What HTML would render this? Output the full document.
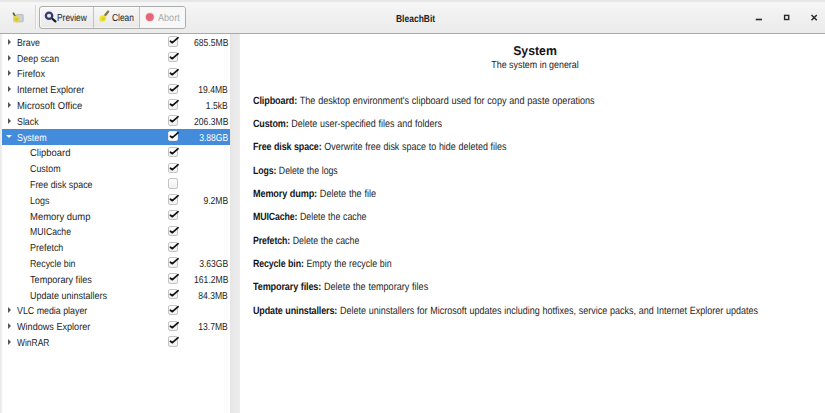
<!DOCTYPE html>
<html><head><meta charset="utf-8"><title>BleachBit</title><style>
html,body{margin:0;padding:0;}
body{width:825px;height:413px;overflow:hidden;position:relative;background:#fff;font-family:"Liberation Sans",sans-serif;text-rendering:geometricPrecision;}
div,svg{position:absolute;}
.hdr{left:0;top:0;width:825px;height:33px;background:linear-gradient(#e4e4e4 0,#e8e8e8 1.5px,#f7f7f7 2.8px,#f1f1f1 40%,#ebebeb 100%);}
.hb{left:0;top:33px;width:825px;height:1px;background:#a9a9a9;}

.ledge{left:0;top:34px;width:3.3px;height:379px;background:linear-gradient(90deg,#e8e8e8,#efefef 45%,#fff);}
.sep{left:35px;top:5px;width:1px;height:24px;background:#d4d4d4;border-right:1px solid #f8f8f8;}
.btns{left:38.5px;top:6.3px;width:145.8px;height:20.8px;border:1px solid #adadab;box-shadow:inset 0 0 0 1px rgba(255,255,255,0.6);border-radius:3px;background:linear-gradient(#f7f7f7,#e8e8e8);overflow:hidden;}
.bsep{top:0;width:1px;height:100%;background:#c2c2c0;}
.abortbg{left:100px;top:0;right:0;bottom:0;background:#f7f7f7;}
.btxt{font-size:10.1px;line-height:12px;color:#222;white-space:pre;transform:scaleX(0.83);transform-origin:0 0;}
.title{font-size:10.1px;font-weight:bold;line-height:12px;color:#222;white-space:pre;transform:scaleX(0.84);transform-origin:0 0;}
.pane{left:230px;top:34px;width:9.6px;height:379px;background:linear-gradient(90deg,#e5e5e5,#eaeaea 35%,#eaeaea 80%,#efefef);}
.paneL{left:224px;top:34px;width:4px;height:379px;background:#fcfcfc;}
.sel{left:2px;width:228px;height:15.9px;background:#438cdc;}
.tx{font-size:10.1px;line-height:12px;color:#1e1e1e;white-space:pre;transform:scaleX(0.89);transform-origin:0 0;}
.tx.sl{color:#fff;}
.sz{right:597px;text-align:right;transform:scaleX(0.85);transform-origin:100% 0;}
.arrr{left:7.8px;width:0;height:0;border-top:3.2px solid transparent;border-bottom:3.2px solid transparent;border-left:3.7px solid #555;}
.arrd{left:6.2px;width:0;height:0;border-left:3px solid transparent;border-right:3px solid transparent;border-top:3.6px solid #f4f8fc;}
.cb{left:168.2px;width:7.7px;height:8.5px;border:1px solid #c4c4c4;border-radius:2px;background:linear-gradient(#fdfdfd,#f0f0f0);}
.cb.on{background:#fff;border-color:#e8e8e8;}
.ck{left:167.6px;}
.ds{left:253.1px;font-size:10.5px;line-height:12px;color:#1e1e1e;white-space:pre;transform:scaleX(0.855);transform-origin:0 0;word-spacing:0.3px;}
.ds b{color:#141414;letter-spacing:-0.15px;}
.h1{font-size:12.8px;font-weight:bold;line-height:16px;color:#151515;white-space:pre;text-align:center;left:434.6px;width:200px;transform:scaleX(0.96);}
.h2{font-size:10.1px;line-height:12px;color:#222;white-space:pre;text-align:center;left:434.7px;width:200px;transform:scaleX(0.88);}
</style></head><body>
<div class="hdr"></div><div class="hb"></div><div class="ledge"></div>
<svg style="left:10px;top:10px" width="16" height="15" viewBox="0 0 16 15">
<rect x="6.4" y="4.6" width="6.8" height="7.2" rx="0.6" fill="#cfcfd8" stroke="#b0b0bc" stroke-width="0.8"/>
<path d="M3.4 3.2 L5.2 6.2" stroke="#6a6040" stroke-width="1.8" stroke-linecap="round"/>
<path d="M3.2 6.4 Q6.4 5 9.8 7.2 Q10.2 10.8 8.6 12.2 Q5.4 12.8 3.4 11.8 Q2.6 9 3.2 6.4 Z" fill="#e0d658"/>
<path d="M4.8 8 Q7 7.4 8.6 8.8 Q8.4 11 6.4 11.4 Q4.6 11 4.8 8 Z" fill="#d4c838"/>
</svg>
<div class="sep"></div>
<div class="btns">
 <div class="abortbg"></div>
 <div class="bsep" style="left:53px"></div>
 <div class="bsep" style="left:99.4px"></div>
</div>
<svg style="left:43px;top:10px" width="15" height="14" viewBox="0 0 15 14">
<circle cx="6.05" cy="5.75" r="3.2" fill="#e6e8f6" stroke="#363c6c" stroke-width="2.3"/>
<path d="M9.6 9 L12.4 11.4" stroke="#1c1c24" stroke-width="2.3" stroke-linecap="round"/>
</svg>
<div class="btxt" style="left:57.4px;top:12.70px">Preview</div>
<svg style="left:97px;top:8px" width="16" height="16" viewBox="0 0 16 16">
<path d="M8 7.4 L11.2 3.6" stroke="#86784a" stroke-width="2.3" stroke-linecap="round"/>
<path d="M3.2 8 Q6.4 6.2 9.2 8.2 Q9.6 11.6 7.6 13.6 Q4.4 14.2 2.4 13 Q2 10 3.2 8 Z" fill="#ece43a"/>
<path d="M5 9.4 Q7 9 8 10.4 Q7.6 12.4 5.4 12.6 Q4 11.6 5 9.4 Z" fill="#dcd21e"/>
</svg>
<div class="btxt" style="left:111.5px;top:12.70px">Clean</div>
<svg style="left:144px;top:10.7px" width="12" height="12" viewBox="0 0 12 12">
<circle cx="5.8" cy="6.1" r="4.6" fill="#f4c4ca"/>
<circle cx="5.8" cy="6.1" r="3.9" fill="#e4687a"/>
</svg>
<div class="btxt" style="left:157.8px;top:12.70px;color:#a8aaaa;transform:scaleX(0.9)">Abort</div>
<div class="title" style="left:396px;top:14.00px">BleachBit</div>
<svg style="left:750px;top:10px" width="72" height="14" viewBox="0 0 72 14">
<rect x="5.8" y="8.7" width="6.2" height="1.6" fill="#2a2a2a"/>
<rect x="34.6" y="5.4" width="4.1" height="4.1" fill="none" stroke="#2a2a2a" stroke-width="1.4"/>
<path d="M61.5 5 L66.8 10.2 M66.8 5 L61.5 10.2" stroke="#2a2a2a" stroke-width="1.5"/>
</svg>
<div class="paneL"></div>
<div class="pane"></div>
<div class="h1" style="top:43.26px">System</div>
<div class="h2" style="top:60.10px">The system in general</div>
<div class="sel" style="top:128.70px"></div>
<div class="tx" style="left:17.1px;top:37.70px;transform:scaleX(0.87)">Brave</div>
<div class="arrr" style="top:38.80px"></div>
<div class="cb" style="top:36.10px"></div>
<svg class="ck" style="top:35.10px" width="12" height="12" viewBox="0 0 12 12"><path d="M2.4 6.2 L4.4 7.7 L10.1 2.7" fill="none" stroke="#111" stroke-width="1.7" stroke-linecap="round" stroke-linejoin="round"/></svg>
<div class="tx sz" style="top:37.70px">685.5MB</div>
<div class="tx" style="left:17.1px;top:53.50px;transform:scaleX(0.871)">Deep scan</div>
<div class="arrr" style="top:54.60px"></div>
<div class="cb" style="top:51.90px"></div>
<svg class="ck" style="top:50.90px" width="12" height="12" viewBox="0 0 12 12"><path d="M2.4 6.2 L4.4 7.7 L10.1 2.7" fill="none" stroke="#111" stroke-width="1.7" stroke-linecap="round" stroke-linejoin="round"/></svg>
<div class="tx" style="left:17.1px;top:69.30px;transform:scaleX(0.907)">Firefox</div>
<div class="arrr" style="top:70.40px"></div>
<div class="cb" style="top:67.70px"></div>
<svg class="ck" style="top:66.70px" width="12" height="12" viewBox="0 0 12 12"><path d="M2.4 6.2 L4.4 7.7 L10.1 2.7" fill="none" stroke="#111" stroke-width="1.7" stroke-linecap="round" stroke-linejoin="round"/></svg>
<div class="tx" style="left:17.1px;top:85.10px;transform:scaleX(0.9009)">Internet Explorer</div>
<div class="arrr" style="top:86.20px"></div>
<div class="cb" style="top:83.50px"></div>
<svg class="ck" style="top:82.50px" width="12" height="12" viewBox="0 0 12 12"><path d="M2.4 6.2 L4.4 7.7 L10.1 2.7" fill="none" stroke="#111" stroke-width="1.7" stroke-linecap="round" stroke-linejoin="round"/></svg>
<div class="tx sz" style="top:85.10px">19.4MB</div>
<div class="tx" style="left:17.1px;top:100.90px;transform:scaleX(0.9336)">Microsoft Office</div>
<div class="arrr" style="top:102.00px"></div>
<div class="cb" style="top:99.30px"></div>
<svg class="ck" style="top:98.30px" width="12" height="12" viewBox="0 0 12 12"><path d="M2.4 6.2 L4.4 7.7 L10.1 2.7" fill="none" stroke="#111" stroke-width="1.7" stroke-linecap="round" stroke-linejoin="round"/></svg>
<div class="tx sz" style="top:100.90px">1.5kB</div>
<div class="tx" style="left:17.1px;top:116.70px;transform:scaleX(0.875)">Slack</div>
<div class="arrr" style="top:117.80px"></div>
<div class="cb" style="top:115.10px"></div>
<svg class="ck" style="top:114.10px" width="12" height="12" viewBox="0 0 12 12"><path d="M2.4 6.2 L4.4 7.7 L10.1 2.7" fill="none" stroke="#111" stroke-width="1.7" stroke-linecap="round" stroke-linejoin="round"/></svg>
<div class="tx sz" style="top:116.70px">206.3MB</div>
<div class="tx sl" style="left:17.1px;top:132.50px;transform:scaleX(0.88)">System</div>
<div class="arrd" style="top:135.10px"></div>
<div class="cb on" style="top:130.90px"></div>
<svg class="ck" style="top:129.90px" width="12" height="12" viewBox="0 0 12 12"><path d="M2.4 6.2 L4.4 7.7 L10.1 2.7" fill="none" stroke="#111" stroke-width="1.7" stroke-linecap="round" stroke-linejoin="round"/></svg>
<div class="tx sl sz" style="top:132.50px">3.88GB</div>
<div class="tx" style="left:29.9px;top:148.30px;transform:scaleX(0.9355)">Clipboard</div>
<div class="cb" style="top:146.70px"></div>
<svg class="ck" style="top:145.70px" width="12" height="12" viewBox="0 0 12 12"><path d="M2.4 6.2 L4.4 7.7 L10.1 2.7" fill="none" stroke="#111" stroke-width="1.7" stroke-linecap="round" stroke-linejoin="round"/></svg>
<div class="tx" style="left:29.9px;top:164.10px;transform:scaleX(0.8782)">Custom</div>
<div class="cb" style="top:162.50px"></div>
<svg class="ck" style="top:161.50px" width="12" height="12" viewBox="0 0 12 12"><path d="M2.4 6.2 L4.4 7.7 L10.1 2.7" fill="none" stroke="#111" stroke-width="1.7" stroke-linecap="round" stroke-linejoin="round"/></svg>
<div class="tx" style="left:29.9px;top:179.90px;transform:scaleX(0.8771)">Free disk space</div>
<div class="cb" style="top:178.30px"></div>
<div class="tx" style="left:29.9px;top:195.70px;transform:scaleX(0.89)">Logs</div>
<div class="cb" style="top:194.10px"></div>
<svg class="ck" style="top:193.10px" width="12" height="12" viewBox="0 0 12 12"><path d="M2.4 6.2 L4.4 7.7 L10.1 2.7" fill="none" stroke="#111" stroke-width="1.7" stroke-linecap="round" stroke-linejoin="round"/></svg>
<div class="tx sz" style="top:195.70px">9.2MB</div>
<div class="tx" style="left:29.9px;top:211.50px;transform:scaleX(0.9375)">Memory dump</div>
<div class="cb" style="top:209.90px"></div>
<svg class="ck" style="top:208.90px" width="12" height="12" viewBox="0 0 12 12"><path d="M2.4 6.2 L4.4 7.7 L10.1 2.7" fill="none" stroke="#111" stroke-width="1.7" stroke-linecap="round" stroke-linejoin="round"/></svg>
<div class="tx" style="left:29.9px;top:227.30px;transform:scaleX(0.8598)">MUICache</div>
<div class="cb" style="top:225.70px"></div>
<svg class="ck" style="top:224.70px" width="12" height="12" viewBox="0 0 12 12"><path d="M2.4 6.2 L4.4 7.7 L10.1 2.7" fill="none" stroke="#111" stroke-width="1.7" stroke-linecap="round" stroke-linejoin="round"/></svg>
<div class="tx" style="left:29.9px;top:243.10px;transform:scaleX(0.8872)">Prefetch</div>
<div class="cb" style="top:241.50px"></div>
<svg class="ck" style="top:240.50px" width="12" height="12" viewBox="0 0 12 12"><path d="M2.4 6.2 L4.4 7.7 L10.1 2.7" fill="none" stroke="#111" stroke-width="1.7" stroke-linecap="round" stroke-linejoin="round"/></svg>
<div class="tx" style="left:29.9px;top:258.90px;transform:scaleX(0.8723)">Recycle bin</div>
<div class="cb" style="top:257.30px"></div>
<svg class="ck" style="top:256.30px" width="12" height="12" viewBox="0 0 12 12"><path d="M2.4 6.2 L4.4 7.7 L10.1 2.7" fill="none" stroke="#111" stroke-width="1.7" stroke-linecap="round" stroke-linejoin="round"/></svg>
<div class="tx sz" style="top:258.90px">3.63GB</div>
<div class="tx" style="left:29.9px;top:274.70px;transform:scaleX(0.9033)">Temporary files</div>
<div class="cb" style="top:273.10px"></div>
<svg class="ck" style="top:272.10px" width="12" height="12" viewBox="0 0 12 12"><path d="M2.4 6.2 L4.4 7.7 L10.1 2.7" fill="none" stroke="#111" stroke-width="1.7" stroke-linecap="round" stroke-linejoin="round"/></svg>
<div class="tx sz" style="top:274.70px">161.2MB</div>
<div class="tx" style="left:29.9px;top:290.50px;transform:scaleX(0.89)">Update uninstallers</div>
<div class="cb" style="top:288.90px"></div>
<svg class="ck" style="top:287.90px" width="12" height="12" viewBox="0 0 12 12"><path d="M2.4 6.2 L4.4 7.7 L10.1 2.7" fill="none" stroke="#111" stroke-width="1.7" stroke-linecap="round" stroke-linejoin="round"/></svg>
<div class="tx sz" style="top:290.50px">84.3MB</div>
<div class="tx" style="left:17.1px;top:306.30px;transform:scaleX(0.8761)">VLC media player</div>
<div class="arrr" style="top:307.40px"></div>
<div class="cb" style="top:304.70px"></div>
<svg class="ck" style="top:303.70px" width="12" height="12" viewBox="0 0 12 12"><path d="M2.4 6.2 L4.4 7.7 L10.1 2.7" fill="none" stroke="#111" stroke-width="1.7" stroke-linecap="round" stroke-linejoin="round"/></svg>
<div class="tx" style="left:17.1px;top:322.10px;transform:scaleX(0.9012)">Windows Explorer</div>
<div class="arrr" style="top:323.20px"></div>
<div class="cb" style="top:320.50px"></div>
<svg class="ck" style="top:319.50px" width="12" height="12" viewBox="0 0 12 12"><path d="M2.4 6.2 L4.4 7.7 L10.1 2.7" fill="none" stroke="#111" stroke-width="1.7" stroke-linecap="round" stroke-linejoin="round"/></svg>
<div class="tx sz" style="top:322.10px">13.7MB</div>
<div class="tx" style="left:17.1px;top:337.90px;transform:scaleX(0.8364)">WinRAR</div>
<div class="arrr" style="top:339.00px"></div>
<div class="cb" style="top:336.30px"></div>
<svg class="ck" style="top:335.30px" width="12" height="12" viewBox="0 0 12 12"><path d="M2.4 6.2 L4.4 7.7 L10.1 2.7" fill="none" stroke="#111" stroke-width="1.7" stroke-linecap="round" stroke-linejoin="round"/></svg>
<div class="ds" style="top:94.56px;transform:scaleX(0.8651)"><b>Clipboard:</b> The desktop environment's clipboard used for copy and paste operations</div>
<div class="ds" style="top:117.90px;transform:scaleX(0.855)"><b>Custom:</b> Delete user-specified files and folders</div>
<div class="ds" style="top:141.24px;transform:scaleX(0.8516)"><b>Free disk space:</b> Overwrite free disk space to hide deleted files</div>
<div class="ds" style="top:164.58px;transform:scaleX(0.8333)"><b>Logs:</b> Delete the logs</div>
<div class="ds" style="top:187.92px;transform:scaleX(0.8678)"><b>Memory dump:</b> Delete the file</div>
<div class="ds" style="top:211.26px;transform:scaleX(0.8372)"><b>MUICache:</b> Delete the cache</div>
<div class="ds" style="top:234.60px;transform:scaleX(0.8383)"><b>Prefetch:</b> Delete the cache</div>
<div class="ds" style="top:257.94px;transform:scaleX(0.8404)"><b>Recycle bin:</b> Empty the recycle bin</div>
<div class="ds" style="top:281.28px;transform:scaleX(0.8649)"><b>Temporary files:</b> Delete the temporary files</div>
<div class="ds" style="top:304.62px;transform:scaleX(0.8567)"><b>Update uninstallers:</b> Delete uninstallers for Microsoft updates including hotfixes, service packs, and Internet Explorer updates</div>
</body></html>
